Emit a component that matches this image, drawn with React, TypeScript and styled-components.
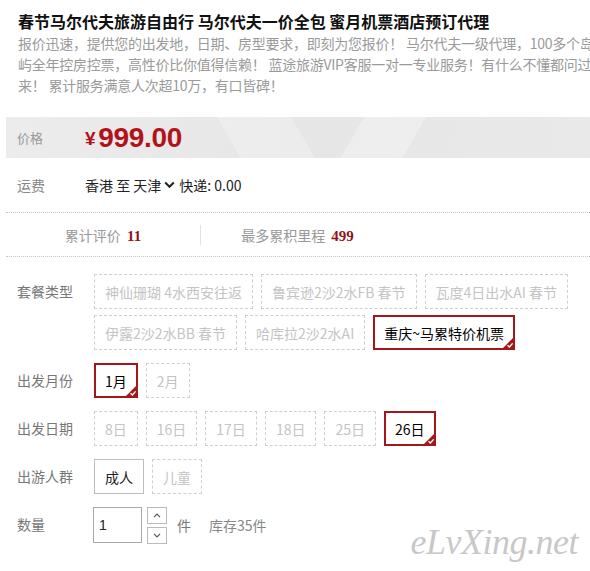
import React from 'react'
import styled, { createGlobalStyle, css } from 'styled-components'

const GlobalStyle = createGlobalStyle`
  html, body {
    margin: 0;
    padding: 0;
    background: #fff;
    overflow: hidden;
  }
  body {
    font-family: "Noto Sans CJK SC", "Noto Sans", sans-serif;
  }
`

type OptionState = 'disabled' | 'available' | 'selected'

interface OptionGroup {
  label: string
  options: Array<{ text: string; state: OptionState }>
}

const groups: Array<OptionGroup> = [
  {
    label: '套餐类型',
    options: [
      { text: '神仙珊瑚 4水西安往返', state: 'disabled' },
      { text: '鲁宾逊2沙2水FB 春节', state: 'disabled' },
      { text: '瓦度4日出水AI 春节', state: 'disabled' },
      { text: '伊露2沙2水BB 春节', state: 'disabled' },
      { text: '哈库拉2沙2水AI', state: 'disabled' },
      { text: '重庆~马累特价机票', state: 'selected' },
    ],
  },
  {
    label: '出发月份',
    options: [
      { text: '1月', state: 'selected' },
      { text: '2月', state: 'disabled' },
    ],
  },
  {
    label: '出发日期',
    options: [
      { text: '8日', state: 'disabled' },
      { text: '16日', state: 'disabled' },
      { text: '17日', state: 'disabled' },
      { text: '18日', state: 'disabled' },
      { text: '25日', state: 'disabled' },
      { text: '26日', state: 'selected' },
    ],
  },
  {
    label: '出游人群',
    options: [
      { text: '成人', state: 'available' },
      { text: '儿童', state: 'disabled' },
    ],
  },
]

const CheckCorner = () => (
  <Corner width="12" height="12" viewBox="0 0 12 12">
    <path d="M12 0 L12 12 L0 12 Z" fill="#a3161b" />
    <path d="M5.5 8.3 L7.4 10 L10.6 6.4" stroke="#fff" strokeWidth="1.4" fill="none" />
  </Corner>
)

const Chevron = () => (
  <svg width="11" height="8" viewBox="0 0 11 8">
    <path d="M1.2 1.5 L5.5 5.8 L9.8 1.5" stroke="#222" strokeWidth="2" fill="none" />
  </svg>
)

const Arrow = ({ up }: { up?: boolean }) => (
  <svg width="8" height="5" viewBox="0 0 8 5">
    <path
      d={up ? 'M1 4.2 L4 1.2 L7 4.2' : 'M1 0.8 L4 3.8 L7 0.8'}
      stroke="#555"
      strokeWidth="1.2"
      fill="none"
    />
  </svg>
)

export default function App() {
  return (
    <Page>
      <GlobalStyle />
      <Title>春节马尔代夫旅游自由行 马尔代夫一价全包 蜜月机票酒店预订代理</Title>
      <Description>
        <span>报价迅速，提供您的出发地，日期、房型要求，即刻为您报价！ 马尔代夫一级代理，100多个岛</span>
        <span>屿全年控房控票，高性价比你值得信赖！ 蓝途旅游VIP客服一对一专业服务！有什么不懂都问过</span>
        <span>来！ 累计服务满意人次超10万，有口皆碑！</span>
      </Description>

      <PriceBar>
        <PriceLabel>价格</PriceLabel>
        <Price>
          <Yen>¥</Yen>999.00
        </Price>
      </PriceBar>

      <ShippingRow>
        <RowLabel>运费</RowLabel>
        <ShippingText>
          香港 至 天津
          <Chevron />
          快递: 0.00
        </ShippingText>
      </ShippingRow>

      <StatsRow>
        <Stat>
          累计评价 <StatValue>11</StatValue>
        </Stat>
        <Stat $divider>
          最多累积里程 <StatValue>499</StatValue>
        </Stat>
        <Stat />
      </StatsRow>

      <Options>
        {groups.map((group) => (
          <GroupRow key={group.label}>
            <GroupLabel>{group.label}</GroupLabel>
            <OptionList>
              {group.options.map((option) => (
                <Option key={option.text} $state={option.state}>
                  {option.text}
                  {option.state === 'selected' && <CheckCorner />}
                </Option>
              ))}
            </OptionList>
          </GroupRow>
        ))}
        <GroupRow>
          <GroupLabel>数量</GroupLabel>
          <QuantityBox>
            <QuantityInput>1</QuantityInput>
            <Spinner>
              <SpinButton>
                <Arrow up />
              </SpinButton>
              <SpinButton>
                <Arrow />
              </SpinButton>
            </Spinner>
            <Unit>件</Unit>
            <Stock>库存35件</Stock>
          </QuantityBox>
        </GroupRow>
      </Options>

      <Watermark>eLvXing.net</Watermark>
    </Page>
  )
}

const Page = styled.div`
  position: relative;
  width: 590px;
  height: 571px;
  padding-left: 6px;
  box-sizing: border-box;
  overflow: hidden;
`

const Title = styled.h1`
  margin: 0;
  padding: 10px 0 0 12px;
  font-size: 16px;
  line-height: 22px;
  font-weight: bold;
  color: #111;
  white-space: nowrap;
`

const Description = styled.div`
  display: flex;
  flex-direction: column;
  padding-left: 12px;
  margin-top: 1px;
  font-size: 14px;
  line-height: 21px;
  letter-spacing: -0.25px;
  color: #9a9a9a;
  white-space: nowrap;
`

const PriceBar = styled.div`
  display: flex;
  align-items: center;
  height: 41px;
  margin-top: 21px;
  margin-right: -10px;
  padding-left: 11px;
  background:
    linear-gradient(120deg, transparent 0 58%, rgba(255, 255, 255, 0.3) 58% 68%, transparent 68%),
    linear-gradient(60deg, transparent 0 38%, rgba(255, 255, 255, 0.25) 38% 50%, transparent 50%),
    linear-gradient(100deg, #ececec 0%, #e6e6e6 50%, #e9e9e9 100%);
`

const PriceLabel = styled.span`
  width: 68px;
  font-size: 13px;
  color: #999;
`

const Price = styled.span`
  font-family: "Liberation Sans", Arial, sans-serif;
  font-size: 28px;
  font-weight: bold;
  color: #b3121a;
  letter-spacing: -0.3px;
`

const Yen = styled.span`
  font-size: 19px;
  margin-right: 3px;
  position: relative;
  top: -2px;
`

const ShippingRow = styled.div`
  display: flex;
  align-items: center;
  height: 54px;
  padding-left: 11px;
  border-bottom: 1px dotted #c4c4c4;
  margin-right: -10px;
`

const RowLabel = styled.span`
  width: 68px;
  font-size: 14px;
  color: #888;
`

const ShippingText = styled.span`
  display: flex;
  align-items: center;
  gap: 3px;
  font-size: 14px;
  color: #222;

  svg {
    margin: 0 1px 0 0;
  }
`

const StatsRow = styled.div`
  display: grid;
  grid-template-columns: 194px 194px 1fr;
  height: 43px;
  align-items: center;
  border-bottom: 1px dotted #c4c4c4;
  margin-right: -10px;
`

const Stat = styled.div<{ $divider?: boolean }>`
  text-align: center;
  font-size: 14px;
  color: #999;
  height: 20px;
  line-height: 20px;
  ${({ $divider }) =>
    $divider &&
    css`
      border-left: 1px solid #e2e2e2;
    `}
`

const StatValue = styled.b`
  font-family: "Liberation Serif", serif;
  font-size: 15px;
  color: #8f1318;
  margin-left: 3px;
`

const Options = styled.div`
  display: flex;
  flex-direction: column;
  gap: 13px;
  padding: 17px 0 0 11px;
`

const GroupRow = styled.div`
  display: flex;
  align-items: flex-start;
`

const GroupLabel = styled.span`
  flex: 0 0 77px;
  font-size: 14px;
  line-height: 35px;
  color: #777;
`

const OptionList = styled.div`
  display: flex;
  flex-wrap: wrap;
  gap: 6px 8px;
  width: 490px;
`

const optionStyles = {
  disabled: css`
    border: 1px dashed #cfcfcf;
    color: #c4c4c4;
    padding: 0 10px;
  `,
  available: css`
    border: 1px solid #bdbdbd;
    color: #222;
    padding: 0 10px;
  `,
  selected: css`
    border: 2px solid #a3161b;
    color: #000;
    padding: 0 9px;
  `,
}

const Option = styled.div<{ $state: OptionState }>`
  position: relative;
  box-sizing: border-box;
  height: 35px;
  display: flex;
  align-items: center;
  font-size: 14px;
  white-space: nowrap;
  background: #fff;
  ${({ $state }) => optionStyles[$state]}
`

const Corner = styled.svg`
  position: absolute;
  right: -1px;
  bottom: -1px;
`

const QuantityBox = styled.div`
  display: flex;
  align-items: center;
  height: 36px;
`

const QuantityInput = styled.div`
  box-sizing: border-box;
  width: 49px;
  height: 36px;
  margin-left: -1px;
  border: 1px solid #a9a9a9;
  padding-left: 5px;
  display: flex;
  align-items: center;
  font-family: "Liberation Sans", Arial, sans-serif;
  font-size: 14px;
  color: #222;
`

const Spinner = styled.div`
  display: flex;
  flex-direction: column;
  gap: 3px;
  margin-left: 5px;
`

const SpinButton = styled.div`
  box-sizing: border-box;
  width: 20px;
  height: 17px;
  border: 1px solid #bbb;
  display: flex;
  align-items: center;
  justify-content: center;
`

const Unit = styled.span`
  margin-left: 10px;
  font-size: 14px;
  color: #777;
`

const Stock = styled.span`
  margin-left: 18px;
  font-size: 14px;
  color: #888;
`

const Watermark = styled.div`
  position: absolute;
  right: 12px;
  bottom: 8px;
  font-family: "Liberation Serif", serif;
  font-style: italic;
  font-size: 36px;
  color: #c8c8c8;
  letter-spacing: -0.5px;
`
